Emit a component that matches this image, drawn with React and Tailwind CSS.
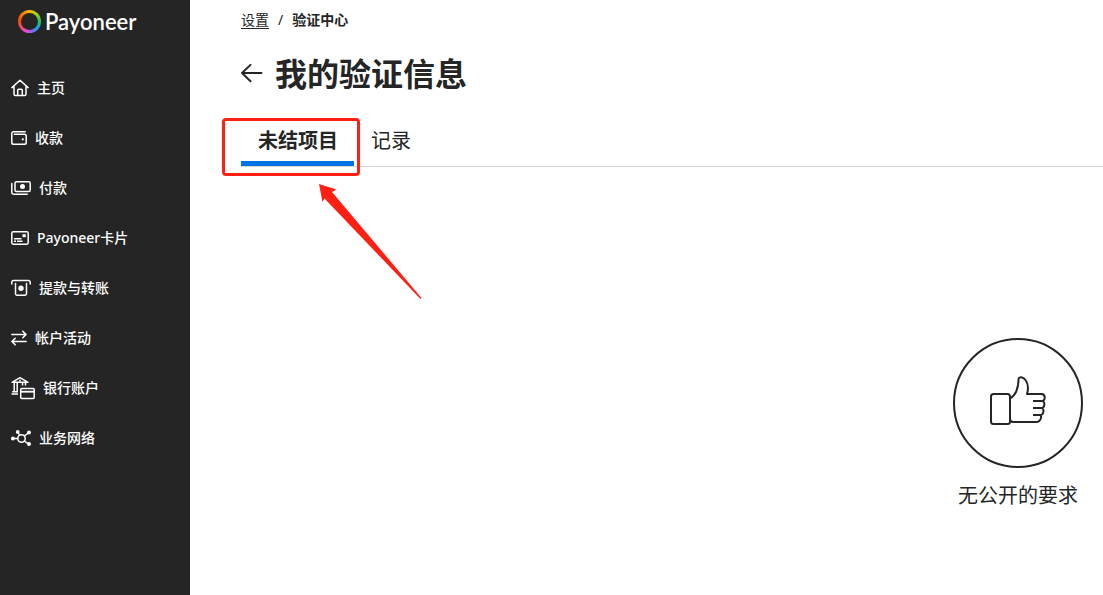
const HomeIcon = () => (
  <svg width="18" height="18" viewBox="0 0 18 18" fill="none" stroke="currentColor" strokeWidth="1.5" strokeLinejoin="round" strokeLinecap="round" aria-hidden="true">
    <path d="M.9 8.6 9 1.2l8.1 7.4M3 7v8.2a1.300 1.300 0 0 0 1.300 1.300h9.400A1.300 1.300 0 0 0 15 15.200V7" />
    <path d="M6.700 16.300v-5a1 1 0 0 1 1-1h2.600a1 1 0 0 1 1 1v5" />
  </svg>
);

const WalletIcon = () => (
  <svg width="16" height="16" viewBox="0 0 16 16" fill="none" stroke="currentColor" strokeWidth="1.5" strokeLinecap="round" aria-hidden="true">
    <path d="M14.200 1.700H2.600a1.800 1.800 0 0 0-1.800 1.800v9a1.800 1.800 0 0 0 1.800 1.800h10.800a1.800 1.800 0 0 0 1.800-1.800V6a1.800 1.800 0 0 0-1.800-1.800H3.400" />
    <circle cx="11.8" cy="9.3" r="1.1" fill="currentColor" stroke="none" />
  </svg>
);

const CashIcon = () => (
  <svg width="20" height="16" viewBox="0 0 20 16" fill="none" stroke="currentColor" strokeWidth="1.5" strokeLinecap="round" aria-hidden="true">
    <rect x="4" y="1.7" width="15.2" height="9.8" rx="1.5" />
    <path d="M.8 3.500v8.700a2.100 2.100 0 0 0 2.100 2.100h13.300" />
    <circle cx="11.5" cy="6.6" r="2.5" fill="currentColor" stroke="none" />
  </svg>
);

const CardIcon = () => (
  <svg width="18" height="16" viewBox="0 0 18 16" fill="none" stroke="currentColor" strokeWidth="1.5" aria-hidden="true">
    <rect x=".8" y="1.8" width="16.4" height="12.4" rx="1.4" />
    <path d="M3 8.800h7.500M3 11.300h2M6 11.300h5.500" strokeWidth="1.4" />
    <path d="M11.500 4.200h3.300v3h-3.300z" fill="currentColor" stroke="none" />
  </svg>
);

const WithdrawIcon = () => (
  <svg width="20" height="18" viewBox="0 0 20 18" fill="none" stroke="currentColor" strokeWidth="1.5" strokeLinecap="round" aria-hidden="true">
    <path d="M.8 5V3.300a1.800 1.800 0 0 1 1.800-1.800h14.800a1.800 1.800 0 0 1 1.800 1.800V5" />
    <path d="M4.500 4.500v10.200a1.500 1.500 0 0 0 1.500 1.500h8a1.500 1.500 0 0 0 1.500-1.500V4.500" />
    <circle cx="10" cy="9.3" r="2.7" fill="currentColor" stroke="none" />
  </svg>
);

const TransferIcon = () => (
  <svg width="16" height="16" viewBox="0 0 16 16" fill="none" stroke="currentColor" strokeWidth="1.5" strokeLinecap="round" strokeLinejoin="round" aria-hidden="true">
    <path d="M.8 4.500h14.300M11.800 1.200l3.300 3.300-3.300 3.300M15.100 11.500H.9M4.200 8.200.9 11.500l3.300 3.300" />
  </svg>
);

const BankIcon = () => (
  <svg width="24" height="24" viewBox="0 0 24 24" fill="none" stroke="currentColor" strokeWidth="1.5" strokeLinejoin="round" aria-hidden="true">
    <path d="M1 6.300 9 1.700l8 4.600zM3.200 7v8M6.200 7v8M11.500 7v2.500M14.500 7v2.500M1.200 15.800H7M.5 18H7" />
    <circle cx="9" cy="4.5" r=".9" fill="currentColor" stroke="none" />
    <rect x="9.7" y="12.4" width="13.5" height="10.2" rx="1" />
    <path d="M9.700 15.700h13.500" strokeWidth="1.8" />
  </svg>
);

const NetworkIcon = () => (
  <svg width="20" height="16" viewBox="0 0 20 16" fill="none" stroke="currentColor" strokeWidth="1.5" aria-hidden="true">
    <circle cx="10.5" cy="8.5" r="3.7" />
    <path d="M2 8.500h4.800M7 2.500l1.700 3M17.500 3l-4.200 2.800M17.500 14l-4-2.800" />
    <g fill="currentColor" stroke="none">
      <circle cx="1.9" cy="8.5" r="1.9" />
      <circle cx="6.7" cy="1.9" r="1.9" />
      <circle cx="18" cy="2.6" r="2" />
      <circle cx="18" cy="14" r="2" />
    </g>
  </svg>
);

const ThumbIcon = () => (
  <svg width="58" height="50" viewBox="0 0 58 50" fill="none" stroke="currentColor" strokeWidth="2" strokeLinejoin="round" aria-hidden="true">
    <rect x="2" y="18" width="19" height="30" rx="2.5" />
    <path d="M21 22.500c5-3 8.500-10 8.500-19.500C30 .5 34 .5 36.500 4c3 4 3 9 1.500 14h14.500c4.200 0 4.200 7 .5 7M44 25h9c3.500 0 3 7-.5 7M44 32h8.500c3 0 2.500 7-1 7M44 39h7c2 0 1.500 7-4 7H24.500c-2 0-3.500-1-3.500-3" />
  </svg>
);

const BackIcon = () => (
  <svg width="22" height="20" viewBox="0 0 22 20" fill="none" stroke="currentColor" strokeWidth="2" strokeLinecap="round" strokeLinejoin="round" aria-hidden="true">
    <path d="M20.500 9H1M9.500.9 1 9l8.500 8.200" />
  </svg>
);

const menu = [
  { label: "主页", Icon: HomeIcon },
  { label: "收款", Icon: WalletIcon },
  { label: "付款", Icon: CashIcon },
  { label: "Payoneer卡片", Icon: CardIcon },
  { label: "提款与转账", Icon: WithdrawIcon },
  { label: "帐户活动", Icon: TransferIcon },
  { label: "银行账户", Icon: BankIcon },
  { label: "业务网络", Icon: NetworkIcon },
];

function Sidebar() {
  return (
    <aside className="w-[190px] shrink-0 bg-[#252525] text-white">
      <a href="#" className="flex h-[43px] items-center gap-1 pl-[18px]">
        <span className="size-[23px] rounded-full bg-[conic-gradient(#f5b800,#a4d516_12%,#22c95c_24%,#13a5e8_36%,#8b62f5_46%,#dc4fd8_54%,#f4457e_64%,#ff4800_76%,#ff7600_88%,#f5b800)] p-[3px]">
          <span className="block size-full rounded-full bg-[#252525]" />
        </span>
        <span className="font-['Lato',sans-serif] text-[22px] leading-6 font-semibold">
          Payoneer
        </span>
      </a>
      <nav className="mt-5">
        {menu.map(({ label, Icon }) => (
          <a
            key={label}
            href="#"
            className="flex h-[50px] items-center gap-2 pl-[11px] text-sm font-medium"
          >
            <Icon />
            {label}
          </a>
        ))}
      </nav>
    </aside>
  );
}

function Tabs() {
  return (
    <div role="tablist" className="mt-5 flex border-b border-[#d9d9d9] text-xl">
      <div className="relative">
        <button
          role="tab"
          aria-selected="true"
          className="h-12 border-b-5 border-[#0074e0] pt-[3px] pr-4 pl-[17px] font-bold"
        >
          未结项目
        </button>
        <span className="pointer-events-none absolute top-0 -right-1.5 -bottom-2.5 -left-[19px] rounded-sm border-3 border-[#ff2013]" />
        <svg
          className="pointer-events-none absolute top-[66px] left-[78px]"
          width="104"
          height="116"
          viewBox="0 0 104 116"
          aria-hidden="true"
        >
          <path d="M0 0 17.500 5.500 13 8 102.500 114 101.500 115 5.500 14.500 3.500 18z" fill="#ff2013" />
        </svg>
      </div>
      <button
        role="tab"
        aria-selected="false"
        className="h-12 border-b-5 border-transparent pt-[3px] pr-4 pl-[17px]"
      >
        记录
      </button>
    </div>
  );
}

export default function App() {
  return (
    <div className="flex min-h-screen bg-white font-['Noto_Sans','Noto_Sans_CJK_SC',sans-serif] text-[#252525]">
      <Sidebar />
      <main className="min-w-0 flex-1 pt-2.5 pl-[51px]">
        <div className="flex gap-[9px] text-sm">
          <a href="#" className="underline underline-offset-3">
            设置
          </a>
          <span>/</span>
          <span className="font-bold">验证中心</span>
        </div>
        <div className="mt-5 flex items-center gap-3">
          <button aria-label="返回">
            <BackIcon />
          </button>
          <h1 className="text-[32px] leading-12 font-bold">我的验证信息</h1>
        </div>
        <Tabs />
        <section className="mt-[171px] flex justify-end pr-5">
          <div className="flex flex-col items-center gap-3.5">
            <div className="flex size-[130px] items-center justify-center rounded-full border-2 pb-1">
              <ThumbIcon />
            </div>
            <p className="text-xl">无公开的要求</p>
          </div>
        </section>
      </main>
    </div>
  );
}
